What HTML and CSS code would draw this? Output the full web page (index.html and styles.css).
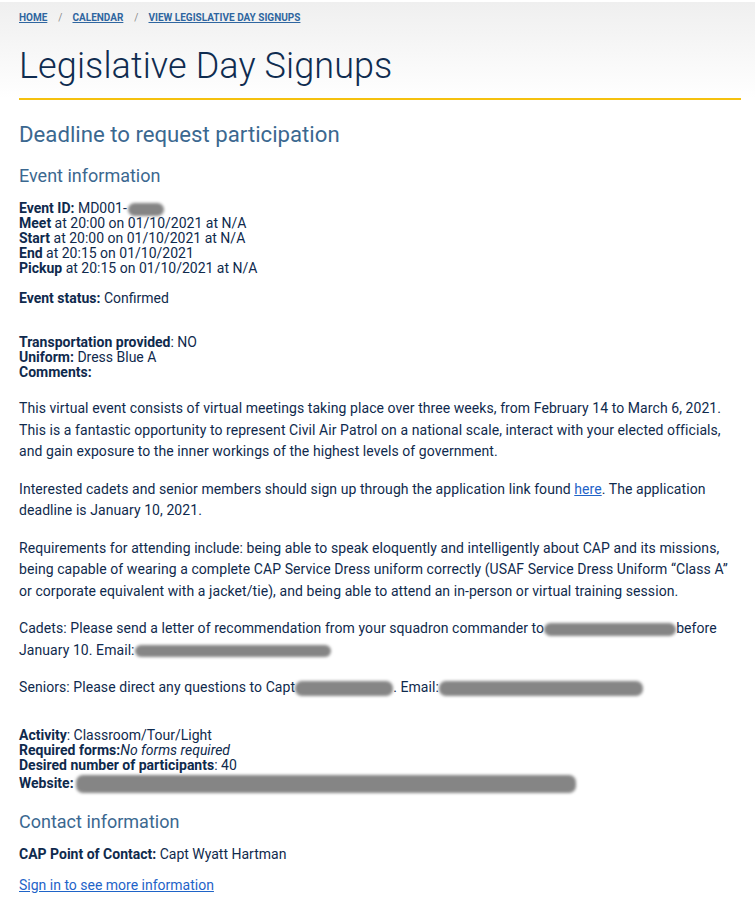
FILE: index.html
```html
<!DOCTYPE html>
<html>
<head>
<meta charset="utf-8">
<link rel="stylesheet" href="styles.css">
</head>
<body>
<header class="hero">
  <nav class="crumbs">
    <a href="#">HOME</a><span class="sep">/</span><a href="#">CALENDAR</a><span class="sep">/</span><a href="#">VIEW LEGISLATIVE DAY SIGNUPS</a>
  </nav>
  <h1 class="title">Legislative Day Signups</h1>
  <div class="rule"></div>
</header>
<main class="content">
  <h2 class="deadline">Deadline to request participation</h2>
  <h3 class="section">Event information</h3>
  <div class="info">
    <b>Event ID:</b> MD001-<span class="blur b-id"></span><br>
    <b>Meet</b> at 20:00 on 01/10/2021 at N/A<br>
    <b>Start</b> at 20:00 on 01/10/2021 at N/A<br>
    <b>End</b> at 20:15 on 01/10/2021<br>
    <b>Pickup</b> at 20:15 on 01/10/2021 at N/A
  </div>
  <div class="info status"><b>Event status:</b> Confirmed</div>
  <div class="info transport">
    <b>Transportation provided</b>: NO<br>
    <b>Uniform:</b> Dress Blue A<br>
    <b>Comments:</b>
  </div>
  <div class="comments">
    <p>This virtual event consists of virtual meetings taking place over three weeks, from February 14 to March 6, 2021. This is a fantastic opportunity to represent Civil Air Patrol on a national scale, interact with your elected officials, and gain exposure to the inner workings of the highest levels of government.</p>
    <p>Interested cadets and senior members should sign up through the application link found <a href="#">here</a>. The application deadline is January 10, 2021.</p>
    <p>Requirements for attending include: being able to speak eloquently and intelligently about CAP and its missions, being capable of wearing a complete CAP Service Dress uniform correctly (USAF Service Dress Uniform “Class A” or corporate equivalent with a jacket/tie), and being able to attend an in-person or virtual training session.</p>
    <p>Cadets: Please send a letter of recommendation from your squadron commander to<span class="blur b-cmd"></span>before January 10. Email:<span class="blur b-mail1"></span></p>
    <p>Seniors: Please direct any questions to Capt<span class="blur b-capt"></span>. Email:<span class="blur b-mail2"></span></p>
  </div>
  <div class="info activity">
    <b>Activity</b>: Classroom/Tour/Light<br>
    <b>Required forms:</b><i>No forms required</i><br>
    <b>Desired number of participants</b>: 40<br>
    <span class="web"><b>Website:</b><span class="blur b-web"></span></span>
  </div>
  <h3 class="section contact">Contact information</h3>
  <div class="info poc"><b>CAP Point of Contact:</b> Capt Wyatt Hartman</div>
  <div class="info signin"><a href="#">Sign in to see more information</a></div>
</main>
</body>
</html>
```

FILE: styles.css
```css
html, body {
  margin: 0;
  padding: 0;
  background: #ffffff;
}
body {
  font-family: Roboto, "Liberation Sans", Arial, sans-serif;
  font-size: 14px;
  color: #0f2a4d;
}
.hero {
  margin-top: 2px;
  padding: 9px 14px 0 19px;
  background: linear-gradient(to bottom, #efefef 0%, #f6f6f6 45%, #ffffff 100%);
  height: 96px;
  box-sizing: border-box;
  position: relative;
}
.crumbs {
  font-size: 10px;
  font-weight: 700;
  line-height: 14px;
  height: 14px;
}
.crumbs a {
  color: #2f66a0;
  text-decoration: underline;
}
.crumbs .sep {
  color: #8a8a8a;
  font-weight: 400;
  margin: 0 10px 0 11px;
}
.title {
  margin: 20px 0 0 0;
  font-size: 36px;
  font-weight: 300;
  line-height: 42px;
  color: #0f2c50;
  letter-spacing: 0.1px;
}
.rule {
  position: absolute;
  left: 19px;
  right: 14px;
  bottom: -2px;
  height: 2px;
  background: #f5c10e;
}
.content {
  padding: 14px 14px 0 19px;
}
.deadline {
  margin: 9px 0 0 0;
  font-size: 22.2px;
  font-weight: 400;
  line-height: 26px;
  color: #3b6890;
}
.section {
  margin: 17px 0 0 0;
  font-size: 18px;
  font-weight: 400;
  line-height: 24px;
  color: #3b6890;
}
.info {
  line-height: 15px;
}
.info b {
  font-weight: 700;
}
.section + .info {
  margin-top: 13px;
}
.status {
  margin-top: 15px;
}
.transport {
  margin-top: 29px;
}
.comments {
  margin-top: 18px;
}
.comments p {
  margin: 0 0 16px 0;
  line-height: 21.5px;
  letter-spacing: 0.07px;
}
.comments p:last-child {
  margin-bottom: 0;
}
a {
  color: #1f64c8;
}
.activity {
  margin-top: 29px;
}
.web {
  display: inline-block;
  line-height: 20px;
}
.section.contact {
  margin-top: 17px;
}
.section + .poc {
  margin-top: 13px;
}
.signin {
  margin-top: 16px;
}
.blur {
  display: inline-block;
  background: #858585;
  border-radius: 7px;
  filter: blur(1.4px);
  vertical-align: middle;
  height: 13px;
}
.b-id { width: 36px; margin-left: 1px; }
.b-cmd { width: 132px; }
.b-mail1 { width: 196px; height: 12px; }
.b-capt { width: 98px; height: 15px; }
.b-mail2 { width: 204px; height: 15px; }
.b-web { width: 500px; height: 18px; margin-left: 2px; }
```
